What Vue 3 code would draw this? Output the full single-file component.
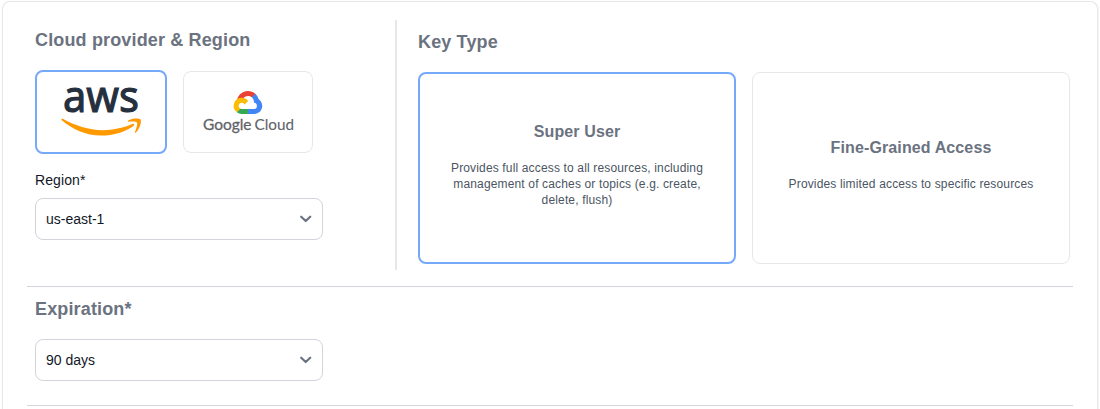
<script setup>
const keyTypes = [
  {
    title: 'Super User',
    text: 'Provides full access to all resources, including management of caches or topics (e.g. create, delete, flush)',
    selected: true,
  },
  {
    title: 'Fine-Grained Access',
    text: 'Provides limited access to specific resources',
    selected: false,
  },
]
</script>

<template>
  <main class="panel">
    <div class="top">
      <section class="provider">
        <h2>Cloud provider &amp; Region</h2>
        <div class="providers">
          <button class="card logo selected" aria-label="AWS">
            <svg width="128" height="80" viewBox="0 0 128 80">
              <text class="aws" x="26" y="39.500" textLength="76" lengthAdjust="spacingAndGlyphs">aws</text>
              <path d="M24.800 48.200C35 57 49 63.600 64 63.600c13 0 25-4 32.500-9.600 1.500-1.200.4-2.800-1.300-2C86 56 75 58.200 66 58.200c-14.500 0-28-4.600-40.200-11.400-1.200-.5-1.900.6-1 1.400z" fill="#f90" />
              <path d="M91.200 48.600c3.500-2.500 10.200-2.600 12.200-1.300 1.600 1.500-.4 9.700-4.500 13.200-.8.600-1.300.1-.9-.8 1.200-2.800 2.900-7.900 2-9.300-.9-1.100-5.100-.9-8.200-.6-1 .1-1.500-.6-.6-1.200z" fill="#f90" />
            </svg>
          </button>
          <button class="card logo google" aria-label="Google Cloud">
            <svg width="128" height="80" viewBox="0 0 128 80">
              <g transform="translate(49.700 19) scale(.1115)">
                <path fill="#ea4335" d="M170.300 56.800l22.200-22.200 1.500-9.400C153.400-11.700 89-7.500 52.400 33.900 42.300 45.400 34.700 59.800 30.700 74.600l8-1.100 44.500-7.400 3.400-3.500c19.800-21.700 53.300-24.700 76.200-6.200z" />
                <path fill="#4285f4" d="M224.200 73.900A101 101 0 0 0 194 25.200l-31.200 31.200a55 55 0 0 1 20.300 44v5.600a27.800 27.800 0 0 1 0 55.300h-55.600l-5.500 5.900v33.400l5.500 5.200h55.600c39.900.3 72.600-31.500 72.900-71.400.2-24.200-11.700-46.900-31.800-60.500z" />
                <path fill="#34a853" d="M71.900 205.800h55.600v-44.500H71.900c-4 0-7.900-.9-11.500-2.500l-8 2.400-22.500 22.300-1.900 7.800a72 72 0 0 0 43.900 14.500z" />
                <path fill="#fbbc05" d="M71.900 61.400A72.400 72.400 0 0 0 28.200 191l32.300-32.200a27.800 27.800 0 1 1 36.800-36.800l32.200-32.300a72 72 0 0 0-57.600-28.300z" />
              </g>
              <text class="gword" x="19" y="58" textLength="48.500" lengthAdjust="spacingAndGlyphs">Google</text>
              <text class="gword light" x="70.500" y="58" textLength="39.500" lengthAdjust="spacingAndGlyphs">Cloud</text>
            </svg>
          </button>
        </div>
        <label>Region*</label>
        <div class="select">
          <span>us-east-1</span>
          <svg width="12" height="8" viewBox="0 0 12 8"><path d="M1.200 1.700L5.700 6l4.500-4.300" /></svg>
        </div>
      </section>
      <section class="keys">
        <h2>Key Type</h2>
        <div class="types">
          <button v-for="k in keyTypes" :key="k.title" class="card type" :class="{ selected: k.selected }">
            <h3>{{ k.title }}</h3>
            <p>{{ k.text }}</p>
          </button>
        </div>
      </section>
    </div>
    <section class="expiration">
      <h2>Expiration*</h2>
      <div class="select">
        <span>90 days</span>
        <svg width="12" height="8" viewBox="0 0 12 8"><path d="M1.200 1.700L5.700 6l4.500-4.300" /></svg>
      </div>
    </section>
  </main>
</template>

<style>
body {
  background: #fff;
}
#app {
  display: flow-root;
}
</style>

<style scoped>
* {
  box-sizing: border-box;
}
.panel {
  width: 1096px;
  height: 408px;
  margin: 1px 0 0 2px;
  padding: 18px 24px 0;
  border: 1px solid #e5e7eb;
  border-bottom: 0;
  border-radius: 8px 8px 0 0;
  box-shadow: 1px 0 1px rgba(0, 0, 0, 0.04);
  font-family: "Liberation Sans", Arial, sans-serif;
  color: #111827;
}
h2, h3, p {
  margin: 0;
}
h2 {
  font-size: 18px;
  line-height: 22px;
  letter-spacing: 0.15px;
  color: #6b7280;
}
.top {
  display: flex;
  height: 267px;
  border-bottom: 1px solid #d1d5db;
  width: 1046px;
}
.provider {
  width: 370px;
  height: 250px;
  padding: 9px 0 0 8px;
  border-right: 2px solid #e5e7eb;
}
.providers {
  display: flex;
  align-items: center;
  gap: 16px;
  margin-top: 19px;
}
.card {
  padding: 0;
  background: #fff;
  border: 1px solid #e5e7eb;
  border-radius: 8px;
  font-family: inherit;
}
.card.selected {
  border: 2px solid #76a9fa;
}
.logo {
  width: 130px;
  height: 82px;
}
.logo.selected {
  width: 132px;
  height: 84px;
}
.logo svg {
  display: block;
  overflow: visible;
}
.aws {
  font: 400 43.500px "Noto Sans", "Open Sans", sans-serif;
  fill: #252f3e;
  stroke: #252f3e;
  stroke-width: 1.1px;
}
.gword {
  font: 400 15.700px Lato, sans-serif;
  fill: #5f6368;
  stroke: #5f6368;
  stroke-width: 0.3px;
}
.gword.light {
  stroke-width: 0.1px;
}
label {
  display: block;
  margin: 18px 0 10px;
  font-size: 14px;
  line-height: 16px;
  letter-spacing: 0.1px;
}
.select {
  width: 288px;
  height: 42px;
  padding: 0 10px;
  display: flex;
  align-items: center;
  justify-content: space-between;
  border: 1px solid #d1d5db;
  border-radius: 8px;
  font-size: 14px;
}
.select path {
  fill: none;
  stroke: #6b7280;
  stroke-width: 2.2;
  stroke-linecap: round;
  stroke-linejoin: round;
}
.keys {
  padding: 11px 0 0 21px;
}
.types {
  display: flex;
  gap: 16px;
  margin-top: 19px;
}
.type {
  width: 318px;
  height: 192px;
  padding: 0 24px 6px;
  display: flex;
  flex-direction: column;
  align-items: center;
  justify-content: center;
  text-align: center;
}
h3 {
  font-size: 16px;
  line-height: 20px;
  letter-spacing: 0.12px;
  color: #6b7280;
}
.type p {
  margin-top: 18px;
  font-size: 12px;
  line-height: 16px;
  letter-spacing: 0.15px;
  color: #4b5563;
}
.expiration {
  width: 1046px;
  height: 119px;
  padding: 11px 0 0 8px;
  border-bottom: 1px solid #d1d5db;
}
.expiration .select {
  margin-top: 19px;
}
</style>
